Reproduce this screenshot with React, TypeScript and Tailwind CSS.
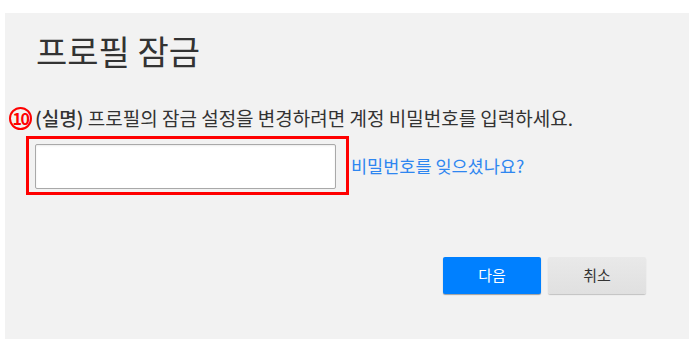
import React from "react";

export default function App() {
  return (
    <div className="w-[693px] h-[355px] bg-white" style={{ fontFamily: '"Noto Sans CJK KR", "Noto Sans", sans-serif' }}>
      <div className="relative top-[13px] left-[5px] w-[684px] h-[326px] bg-[#f2f2f2] flex flex-col">
        {/* Title */}
        <h1 className="pl-[31px] pt-[18px] text-[34px] leading-[40px] text-[#333] font-normal">프로필 잠금</h1>

        {/* Description with annotation marker */}
        <div className="mt-[35px] pl-[4px] flex items-center h-[24px]">
          <span className="w-[23px] h-[23px] shrink-0 rounded-full border-2 border-[#ff0000] text-[#ff0000] font-bold text-[16px] leading-none flex items-center justify-center tracking-[-1.5px]">
            10
          </span>
          <span className="ml-[3px] text-[19px] text-[#333] leading-[24px]">
            <span className="font-medium">(실명)</span> 프로필의 잠금 설정을 변경하려면 계정 비밀번호를 입력하세요.
          </span>
        </div>

        {/* Password row */}
        <div className="mt-[6px] pl-[21px] flex items-center">
          <div className="border-[3px] border-[#ff0000] pt-[5px] pl-[6px] pr-[10px] pb-[3px]">
            <input
              type="password"
              className="block w-[301px] h-[45px] bg-white border border-[#a9a9a9] rounded-[2px] shadow-[inset_0_1px_2px_rgba(0,0,0,0.08)] outline-none"
            />
          </div>
          <a className="ml-[2px] text-[17.5px] text-[#2e86f0] leading-[22px] cursor-pointer">비밀번호를 잊으셨나요?</a>
        </div>

        {/* Actions */}
        <div className="mt-[62px] pl-[438px] flex gap-[7px]">
          <button className="w-[98px] h-[37px] rounded-[2px] bg-[#0080ff] text-white text-[15px] shadow-[0_1px_1px_rgba(0,0,0,0.35)]">
            다음
          </button>
          <button className="w-[98px] h-[37px] rounded-[2px] bg-gradient-to-b from-[#e9e9e9] to-[#e0e0e0] text-[#333] text-[15px] shadow-[0_1px_1px_rgba(0,0,0,0.2)]">
            취소
          </button>
        </div>
      </div>
    </div>
  );
}
